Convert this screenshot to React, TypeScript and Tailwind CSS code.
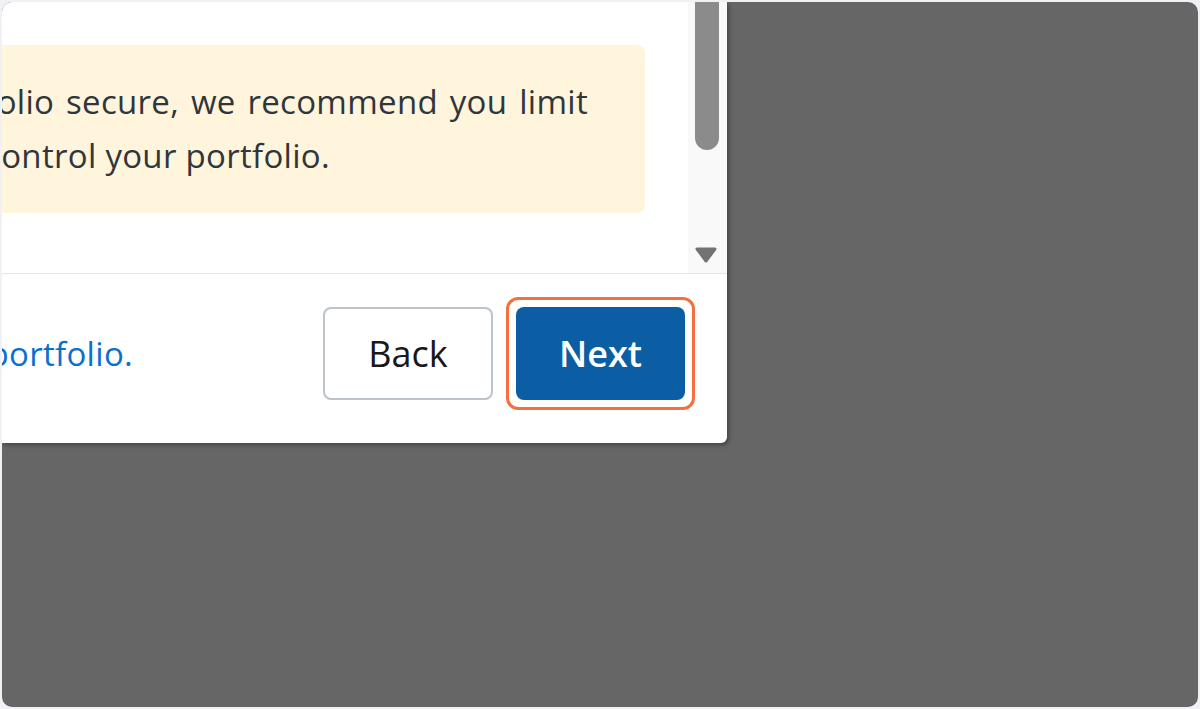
import React from "react";

export default function App() {
  return (
    <div
      className="w-[1200px] h-[709px] bg-[#f1f0f5] p-[2px]"
      style={{ fontFamily: '"Open Sans", "Noto Sans", sans-serif' }}
    >
      <div className="h-full w-full rounded-[10px] overflow-hidden bg-[#666666]">
        <div className="w-[725px] h-[441px] bg-white rounded-br-[6px] shadow-[2px_2px_4px_rgba(0,0,0,0.35)] flex flex-col overflow-hidden">
          {/* scroll area */}
          <div className="h-[271px] flex">
            <div className="flex-1 pt-[43px] overflow-hidden">
              <div className="w-[643px] h-[168px] rounded-r-[8px] bg-[#fef5dc] py-[30px] overflow-hidden text-[33px] tracking-[0.3px] leading-[54px] text-[#30363b]">
                <div className="flex justify-end pr-[57px]">
                  <span className="whitespace-nowrap shrink-0 [word-spacing:3px]">
                    To keep your portfolio secure, we recommend you limit
                  </span>
                </div>
                <div className="flex justify-end pr-[315px]">
                  <span className="whitespace-nowrap shrink-0">
                    the number of people who can control your portfolio.
                  </span>
                </div>
              </div>
            </div>
            <div className="w-[39px] bg-[#f9f9f9] flex flex-col">
              <div className="ml-[7px] w-[24px] h-[148px] bg-[#8b8b8b] rounded-b-[12px]" />
              <div className="mt-auto mb-[10px] ml-[7px]">
                <svg width="22" height="16" viewBox="0 0 22 16">
                  <polygon
                    points="2,2 20,2 11,14"
                    fill="#737373"
                    stroke="#737373"
                    strokeWidth="3"
                    strokeLinejoin="round"
                  />
                </svg>
              </div>
            </div>
          </div>
          {/* footer */}
          <div className="flex-1 border-t border-[#e6e6e6] pt-[33px] flex items-start">
            <div className="w-[131px] h-[93px] flex items-center justify-end overflow-visible">
              <span className="whitespace-nowrap shrink-0 text-[33px] tracking-[0.3px] text-[#0b6fd0]">
                Learn how to secure your portfolio.
              </span>
            </div>
            <div className="ml-auto mr-[42px] flex gap-[23px]">
              <button className="w-[170px] h-[93px] rounded-[8px] border-2 border-[#bcc3ca] bg-white text-[36px] text-[#181818] flex items-center justify-center">
                Back
              </button>
              <div className="relative">
                <span className="absolute -inset-[10px] rounded-[12px] border-[3px] border-[#f4703e]" />
                <button className="w-[169px] h-[93px] rounded-[8px] bg-[#0b5ea4] text-[36px] font-semibold text-white flex items-center justify-center">
                  Next
                </button>
              </div>
            </div>
          </div>
        </div>
      </div>
    </div>
  );
}
